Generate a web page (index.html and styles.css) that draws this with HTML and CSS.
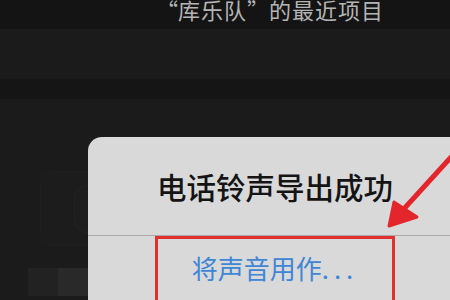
FILE: index.html
```
<!DOCTYPE html>
<html lang="zh-CN">
<head>
<meta charset="utf-8">
<title>电话铃声导出成功</title>
<link rel="stylesheet" href="styles.css">
</head>
<body>
<div class="screen">
	<div class="band band-top">
		<p class="recent"><span class="ql">“</span>库乐队<span class="qr">”</span>的最近项目</p>
	</div>
	<div class="band band-mid"></div>
	<div class="band band-dark"></div>
	<div class="lower">
		<div class="ghost-icon"><div class="ghost-disc"></div></div>
		<div class="ghost-label"><span class="ghost-tab"></span></div>
	</div>

	<div class="alert">
		<div class="alert-title">电话铃声导出成功</div>
		<div class="alert-actions">
			<div class="mark">
				<span class="action">将声音用作<span class="dots">...</span></span>
			</div>
		</div>
	</div>

	<svg class="arrow" width="450" height="300" viewBox="0 0 450 300">
		<path d="M452 156 L402 211" stroke="#e3262b" stroke-width="5" stroke-linecap="round" fill="none"/>
		<path d="M389 226 L394 202 L417 217 Z" fill="#e3262b" stroke="#e3262b" stroke-width="3" stroke-linejoin="round"/>
	</svg>
</div>
</body>
</html>
```
FILE: styles.css
```
html, body {
	margin:0;
	padding:0;
	background:#1b1b1b;}
.screen {
	position:relative;
	width:450px;
	height:300px;
	overflow:hidden;
	font-family:"Noto Sans CJK SC", "Noto Sans", sans-serif;}
.band {width:100%;}
.band-top {
	height:33px;
	background:#141414;}
.band-mid {
	height:50px;
	background:#1b1b1b;}
.band-dark {
	height:20px;
	background:#151515;}
.recent {
	margin:-4px 0 0 0;
	padding-left:90px;
	text-align:center;
	font-size:22px;
	line-height:26px;
	letter-spacing:1px;
	color:#b4b4b4;}
.ql, .qr {
	display:inline-block;
	width:1em;}
.ql {text-align:right;}
.qr {text-align:left;}
.lower {
	height:197px;
	padding-left:40px;
	display:flex;
	flex-direction:column;}
.ghost-icon {
	margin-top:72px;
	width:60px;
	height:84px;
	border-radius:12px;
	border:1px solid #1f1f1f;
	background:#1c1c1c;
	display:flex;
	align-items:center;
	justify-content:flex-end;}
.ghost-disc {
	width:26px;
	height:46px;
	border-radius:14px 0 0 14px;
	border:1px solid #232323;
	border-right:none;
	background:#1d1d1d;}
.ghost-label {
	margin:22px 0 0 -12px;
	width:60px;
	height:28px;
	background:#222;
	display:flex;
	justify-content:flex-end;}
.ghost-tab {
	width:30px;
	height:28px;
	background:#292929;}

.alert {
	position:absolute;
	left:88px;
	top:137px;
	width:400px;
	height:200px;
	border-radius:14px;
	background:#d9d9d9;
	display:flex;
	flex-direction:column;}
.alert-title {
	height:99px;
	padding-left:69px;
	box-sizing:border-box;
	padding-top:30px;
	font-size:29.5px;
	font-weight:500;
	line-height:38px;
	color:#141414;
	border-bottom:1px solid #a9a9a9;}
.alert-actions {padding-left:67px;}
.mark {
	width:240px;
	height:70px;
	box-sizing:border-box;
	border:3px solid #e1312f;
	display:flex;
	justify-content:center;
	padding-top:12px;}
.action {
	font-size:26px;
	line-height:34px;
	color:#3f86d6;}
.dots {letter-spacing:5px;}
.arrow {
	position:absolute;
	left:0;
	top:0;}
```
